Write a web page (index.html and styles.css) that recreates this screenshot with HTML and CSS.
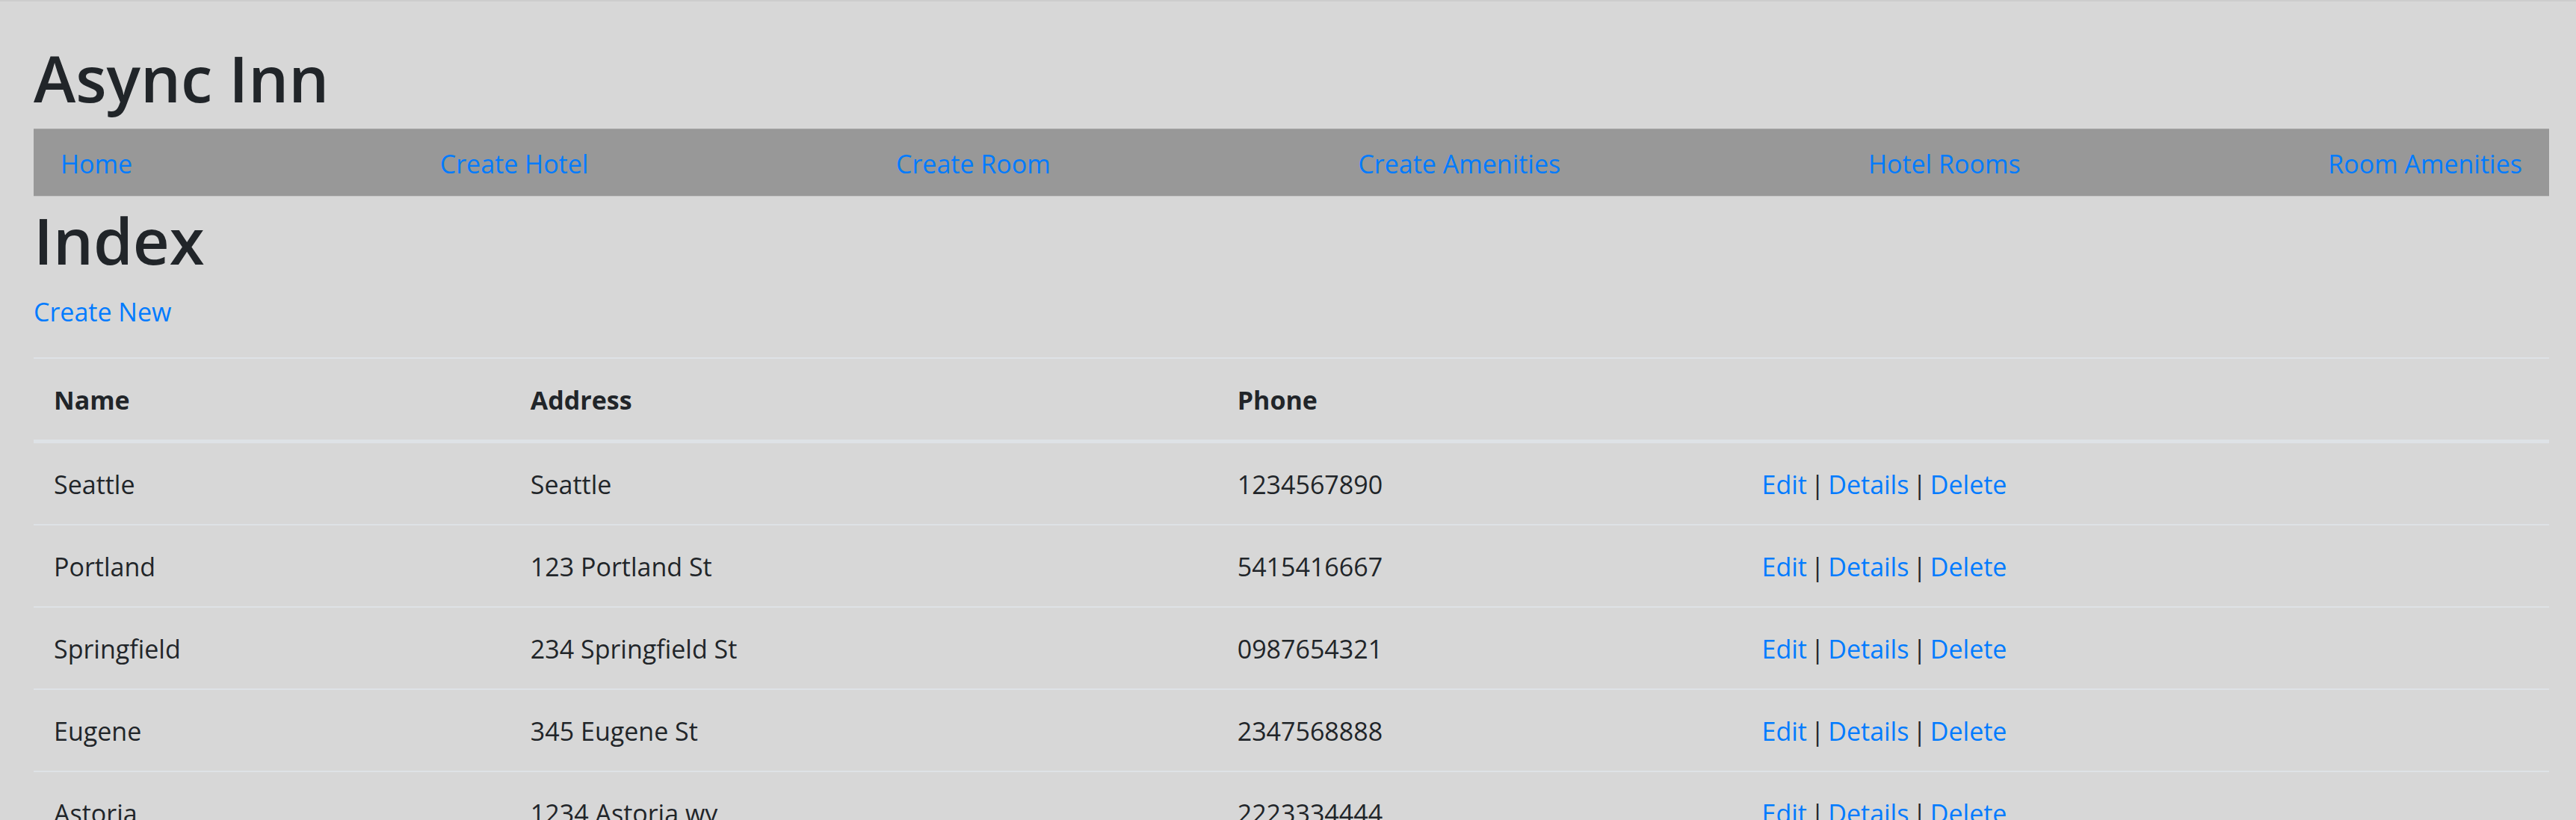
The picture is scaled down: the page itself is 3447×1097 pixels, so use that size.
FILE: index.html
```html
<!DOCTYPE html>
<html lang="en">
<head>
<meta charset="utf-8">
<title>Async Inn</title>
<link rel="stylesheet" href="styles.css">
</head>
<body>
<header>
<h1>Async Inn</h1>
<nav class="nav">
<a href="#">Home</a>
<a href="#">Create Hotel</a>
<a href="#">Create Room</a>
<a href="#">Create Amenities</a>
<a href="#">Hotel Rooms</a>
<a href="#">Room Amenities</a>
</nav>
</header>
<main>
<h1>Index</h1>
<p class="create"><a href="#">Create New</a></p>
<table class="table">
<colgroup><col class="col-name"><col class="col-address"><col class="col-phone"><col></colgroup>
<thead>
<tr><th>Name</th><th>Address</th><th>Phone</th><th></th></tr>
</thead>
<tbody>
<tr><td>Seattle</td><td>Seattle</td><td>1234567890</td><td><a href="#">Edit</a> <span class="sep">|</span> <a href="#">Details</a> <span class="sep">|</span> <a href="#">Delete</a></td></tr>
<tr><td>Portland</td><td>123 Portland St</td><td>5415416667</td><td><a href="#">Edit</a> <span class="sep">|</span> <a href="#">Details</a> <span class="sep">|</span> <a href="#">Delete</a></td></tr>
<tr><td>Springfield</td><td>234 Springfield St</td><td>0987654321</td><td><a href="#">Edit</a> <span class="sep">|</span> <a href="#">Details</a> <span class="sep">|</span> <a href="#">Delete</a></td></tr>
<tr><td>Eugene</td><td>345 Eugene St</td><td>2347568888</td><td><a href="#">Edit</a> <span class="sep">|</span> <a href="#">Details</a> <span class="sep">|</span> <a href="#">Delete</a></td></tr>
<tr><td>Astoria</td><td>1234 Astoria wy</td><td>2223334444</td><td><a href="#">Edit</a> <span class="sep">|</span> <a href="#">Details</a> <span class="sep">|</span> <a href="#">Delete</a></td></tr>
</tbody>
</table>
</main>
</body>
</html>
```

FILE: styles.css
```css
* {
  box-sizing: border-box;
}

html {
  background: #d7d7d7;
  scrollbar-width: none;
}

body {
  margin: 0;
  padding: 44px 36px 0 45px;
  border-top: 2px solid #cdcdcd;
  color: #212529;
  font-family: "Open Sans", sans-serif;
  font-size: 34px;
  line-height: 54px;
}

a {
  color: #007bff;
  text-decoration: none;
}

h1 {
  margin: 0;
  padding: 4px 0 14px;
  font-size: 85px;
  font-weight: 600;
  line-height: 108px;
}

.nav {
  display: flex;
  justify-content: space-between;
  padding: 19px 36px 16px;
  background: #989898;
  border-top: 1px solid #a6a6a6;
  border-bottom: 1px solid #c6c6c6;
}

.create {
  margin: 0;
  padding: 1px 0 34px;
}

.table {
  width: 100%;
  table-layout: fixed;
  border-collapse: separate;
  border-spacing: 0;
}

.col-name {
  width: 18.95%;
}

.col-address {
  width: 28.1%;
}

.col-phone {
  width: 20.85%;
}

.table th,
.table td {
  padding: 28px 27px 26px;
  border-top: 2px solid #dee2e6;
  text-align: left;
}

.table th {
  border-bottom: 5px solid #dee2e6;
  font-weight: 700;
}

.table tbody tr:first-child td {
  border-top: 0;
}

.sep {
  margin: 0 -4px;
}
```
